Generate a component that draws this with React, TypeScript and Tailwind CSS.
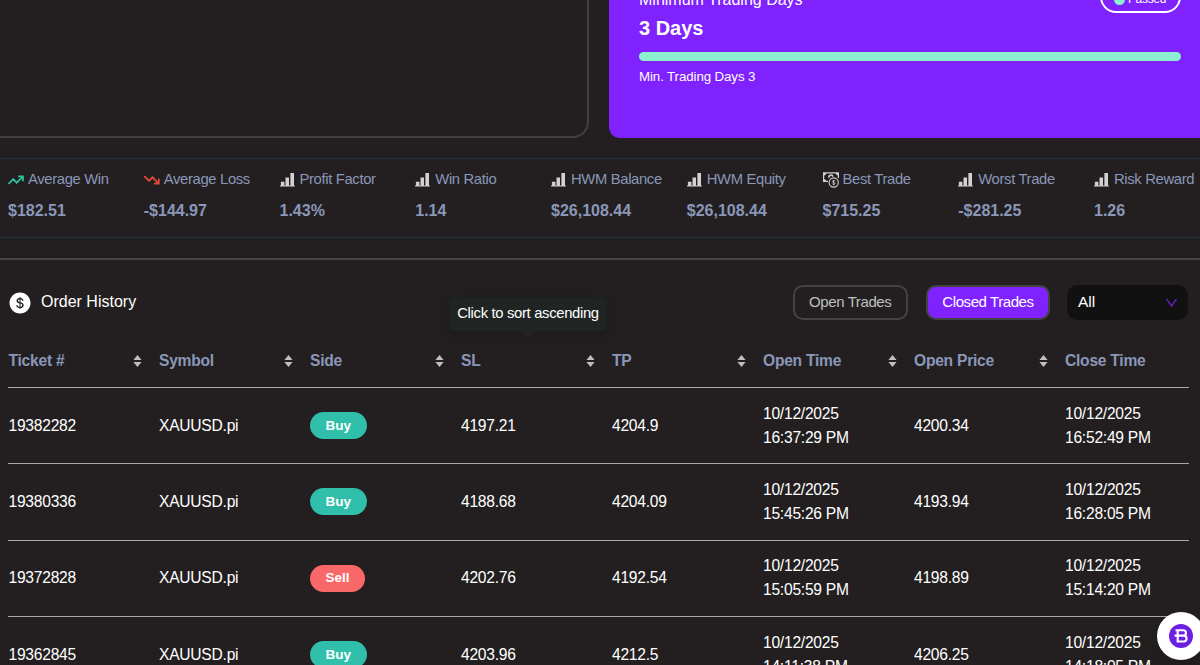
import type { ReactNode } from 'react';
import { AiFillDollarCircle } from 'react-icons/ai';

type Trade = {
  ticket: string;
  symbol: string;
  side: 'Buy' | 'Sell';
  sl: string;
  tp: string;
  openTime: [string, string];
  openPrice: string;
  closeTime: [string, string];
};

const trades: Trade[] = [
  { ticket: '19382282', symbol: 'XAUUSD.pi', side: 'Buy', sl: '4197.21', tp: '4204.9', openTime: ['10/12/2025', '16:37:29 PM'], openPrice: '4200.34', closeTime: ['10/12/2025', '16:52:49 PM'] },
  { ticket: '19380336', symbol: 'XAUUSD.pi', side: 'Buy', sl: '4188.68', tp: '4204.09', openTime: ['10/12/2025', '15:45:26 PM'], openPrice: '4193.94', closeTime: ['10/12/2025', '16:28:05 PM'] },
  { ticket: '19372828', symbol: 'XAUUSD.pi', side: 'Sell', sl: '4202.76', tp: '4192.54', openTime: ['10/12/2025', '15:05:59 PM'], openPrice: '4198.89', closeTime: ['10/12/2025', '15:14:20 PM'] },
  { ticket: '19362845', symbol: 'XAUUSD.pi', side: 'Buy', sl: '4203.96', tp: '4212.5', openTime: ['10/12/2025', '14:11:38 PM'], openPrice: '4206.25', closeTime: ['10/12/2025', '14:18:05 PM'] },
];

const columns = ['Ticket #', 'Symbol', 'Side', 'SL', 'TP', 'Open Time', 'Open Price', 'Close Time'];

function TrendUp() {
  return (
    <svg width="16" height="16" viewBox="0 0 16 16" fill="none" stroke="#2dc5a5" strokeWidth="1.7">
      <path d="M0.5 12 5.2 7.2 8.7 10.7 14.4 5M10.2 4.4H15V9.2" />
    </svg>
  );
}

function TrendDown() {
  return (
    <svg width="16" height="16" viewBox="0 0 16 16" fill="none" stroke="#e84b3c" strokeWidth="1.7">
      <path d="M0.3 4 5 8.8 8.5 5.3 14.2 11M10 11.6H14.8V6.8" />
    </svg>
  );
}

function Bars() {
  return (
    <svg width="16" height="16" viewBox="0 0 16 16" fill="#d2d2d2">
      <path d="M.9 9.7h3.5V14H.9zM5.5 5.6H9V14H5.5zM10.4 1h3.6v13h-3.6zM0 13.5h14.8v.9H0z" />
    </svg>
  );
}

function Cash() {
  return (
    <svg width="16" height="16" viewBox="0 0 16 16" fill="none" stroke="#d2d2d2">
      <path d="M5 9.4H.6V.9h14.8V6" strokeWidth="1.2" />
      <path d="M.6 3.4A2.5 2.5 0 0 0 3.1.9H.6zM15.4 3.4A2.5 2.5 0 0 1 12.9.9h2.5zM.6 6.9a2.5 2.5 0 0 1 2.5 2.5H.6z" fill="#d2d2d2" stroke="none" />
      <path d="M6 5.6a2 2 0 0 1 3.9-1" strokeWidth="1.6" />
      <circle cx="10.7" cy="10.5" r="4.6" strokeWidth="1.1" />
      <path d="M12 9.3c-.2-.6-.7-.8-1.3-.8-.8 0-1.3.4-1.3 1 0 1.3 2.7.7 2.7 2 0 .6-.6 1-1.4 1-.7 0-1.2-.3-1.4-.9M10.7 7.8v5.4" strokeWidth=".8" />
    </svg>
  );
}

const stats: { label: string; value: string; icon: ReactNode }[] = [
  { label: 'Average Win', value: '$182.51', icon: <TrendUp /> },
  { label: 'Average Loss', value: '-$144.97', icon: <TrendDown /> },
  { label: 'Profit Factor', value: '1.43%', icon: <Bars /> },
  { label: 'Win Ratio', value: '1.14', icon: <Bars /> },
  { label: 'HWM Balance', value: '$26,108.44', icon: <Bars /> },
  { label: 'HWM Equity', value: '$26,108.44', icon: <Bars /> },
  { label: 'Best Trade', value: '$715.25', icon: <Cash /> },
  { label: 'Worst Trade', value: '-$281.25', icon: <Bars /> },
  { label: 'Risk Reward', value: '1.26', icon: <Bars /> },
];

function Sorter() {
  return (
    <svg width="9" height="12" viewBox="0 0 9 12" fill="#bfbfbf">
      <path d="M4.5 0 8.6 4.9H.4zM4.5 12 .4 7.1h8.2z" />
    </svg>
  );
}

function SideBadge({ side }: { side: Trade['side'] }) {
  return (
    <span className={`inline-flex h-[27px] items-center justify-center rounded-full text-[13.5px] tracking-normal font-bold ${
      side === 'Buy' ? 'w-[56.5px] bg-[#2fbfaa]' : 'w-[55px] bg-[#f96868]'
    }`}>
      {side}
    </span>
  );
}

function TradingDays() {
  return (
    <div className="flex h-[138px]">
      <div className="-mt-8 w-[588.5px] rounded-br-[16px] border-r-2 border-b-2 border-[#404040]" />
      <div className="ml-[20.5px] -mt-8 flex-1 rounded-bl-[11px] bg-[#7f22fe] pr-[19.5px] pl-[30px]">
        <div className="flex h-[46px] items-end justify-between">
          <p className="mb-[2px] text-base leading-6">Minimum Trading Days</p>
          <div className="mb-[1px] flex h-8 w-[81px] items-center justify-center gap-[3px] rounded-2xl border-2 border-white pt-1 text-[12px] tracking-[-0.3px]">
            <span className="size-[11px] rounded-full bg-[#8af0d0]" />
            <span>Passed</span>
          </div>
        </div>
        <p className="text-[20px] leading-7 font-bold">3 Days</p>
        <div className="mt-[10px] h-[9px] rounded-full bg-[#8af0d0]" />
        <p className="mt-[6px] text-[13.3px] leading-5 tracking-[-0.1px]">Min. Trading Days 3</p>
      </div>
    </div>
  );
}

function StatsBar() {
  return (
    <div className="mt-5 flex h-20 overflow-hidden border-y border-[#22323c] pl-2 text-[#8a97b8]">
      {stats.map(s => (
        <div key={s.label} className="w-[135.75px] shrink-0 pt-[10px]">
          <div className="flex h-[22px] items-center gap-1 text-[14.8px] tracking-[-0.34px] whitespace-nowrap">
            {s.icon}
            <span className="-mt-0.5">{s.label}</span>
          </div>
          <p className="mt-2 text-base leading-6 font-bold">{s.value}</p>
        </div>
      ))}
    </div>
  );
}

function Toolbar() {
  return (
    <div className="flex h-[35px] items-center pr-3 pl-2">
      <AiFillDollarCircle size={24} className="text-white" />
      <h2 className="-mt-0.5 ml-[9px] text-base">Order History</h2>
      <button className="ml-auto h-[35px] w-[115.5px] rounded-[10px] border-2 border-[#434343] text-[15px] tracking-[-0.4px] text-[#bfbfbf]">Open Trades</button>
      <button className="ml-[18px] h-[35px] w-[124px] rounded-[10px] border-2 border-[#434343] bg-[#7f22fe] text-[15px] tracking-[-0.42px]">Closed Trades</button>
      <div className="ml-[17px] flex h-[35px] w-[121px] items-center justify-between rounded-[10px] bg-[#111111] px-[11px] text-[15.5px]">
        <span className="-mt-0.5">All</span>
        <svg width="11" height="10" viewBox="0 0 11 10" fill="none" stroke="#7f22fe" strokeWidth="1.2">
          <path d="M.5 1 5.5 8l5-7" />
        </svg>
      </div>
    </div>
  );
}

const rowGrid = 'grid grid-cols-[150.5px_repeat(7,151px)] items-center pl-[0.5px] border-b border-[#a7a7ac]';

function TradesTable() {
  return (
    <div className="mx-2 mr-[11px] overflow-hidden pt-[15px] text-[15.6px] tracking-[-0.24px]">
      <div className={`${rowGrid} h-[53px] text-[#8a97b8]`}>
        {columns.map(c => (
          <div key={c} className="flex items-center justify-between pr-[17px] font-bold">
            <span>{c}</span>
            {c !== 'Close Time' && <Sorter />}
          </div>
        ))}
      </div>
      {trades.map(t => (
        <div key={t.ticket} className={`${rowGrid} h-[76.3px] leading-[23.8px]`}>
          <span>{t.ticket}</span>
          <span>{t.symbol}</span>
          <SideBadge side={t.side} />
          <span>{t.sl}</span>
          <span>{t.tp}</span>
          <span>{t.openTime[0]}<br />{t.openTime[1]}</span>
          <span>{t.openPrice}</span>
          <span>{t.closeTime[0]}<br />{t.closeTime[1]}</span>
        </div>
      ))}
    </div>
  );
}

function SortTooltip() {
  return (
    <div className="absolute top-[297px] left-[449px] flex h-[34px] w-[158px] items-center justify-center rounded-md bg-[#202423] pb-0.5 text-[14.8px] tracking-[-0.32px] shadow-[0_4px_14px_rgba(0,0,0,0.15)]">
      Click to sort ascending
      <svg className="absolute top-full left-[71px]" width="16" height="8" viewBox="0 0 16 8" fill="#202423">
        <path d="M0 0h16L9 6.5q-1 1-2 0z" />
      </svg>
    </div>
  );
}

function ChatButton() {
  return (
    <button className="absolute top-[612px] left-[1157px] flex size-12 items-center justify-center rounded-full bg-white shadow-lg">
      <svg width="24" height="24" viewBox="0 0 24 24" fill="none">
        <circle cx="12" cy="12" r="12" fill="#6d1ee0" />
        <path d="M6.5 6.3h7.8a2.6 2.6 0 0 1 0 5.3H5.5M8.7 6.3v11.2M7.6 17.5h7a2.9 2.9 0 0 0 0-5.9" stroke="#fff" strokeWidth="2.1" />
      </svg>
    </button>
  );
}

export default function App() {
  return (
    <div className="relative h-[665px] w-[1200px] overflow-hidden bg-[#231f20] font-['Liberation_Sans',Arial,sans-serif] text-white">
      <TradingDays />
      <StatsBar />
      <div className="mt-5 border-t-2 border-[#454343] pt-[25px]">
        <Toolbar />
        <TradesTable />
      </div>
      <SortTooltip />
      <ChatButton />
    </div>
  );
}
